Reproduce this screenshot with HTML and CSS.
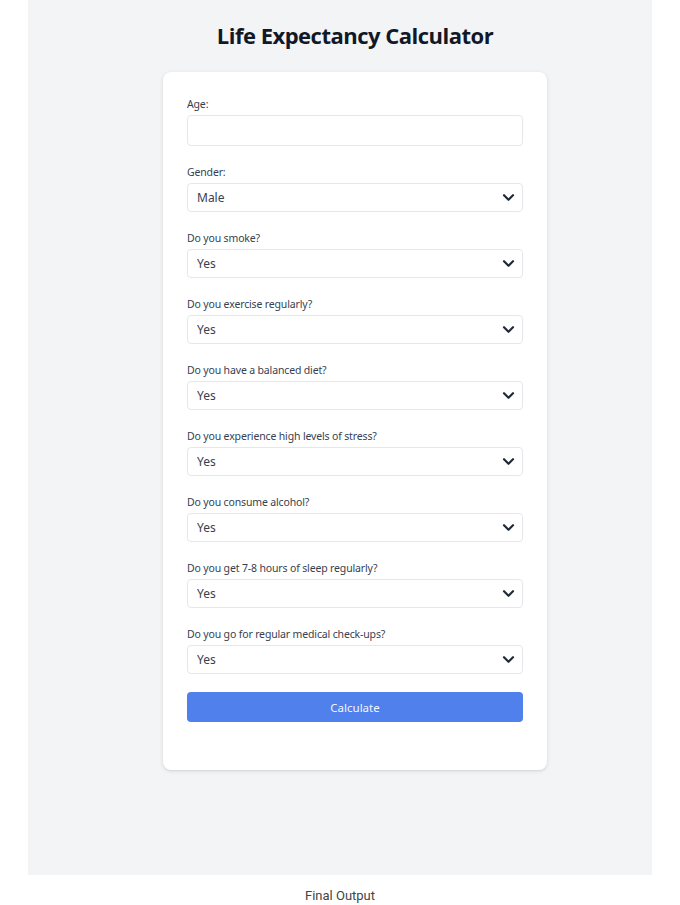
FILE: index.html
```html
<!DOCTYPE html>
<html lang="en">
<head>
<meta charset="utf-8">
<title>Life Expectancy Calculator</title>
<link rel="stylesheet" href="styles.css">
</head>
<body>
<div class="frame">
  <main class="panel">
    <h1 class="title">Life Expectancy Calculator</h1>
    <form class="card">
      <div class="field">
        <label class="label" for="age">Age:</label>
        <input class="input" id="age" type="number">
      </div>
      <div class="field">
        <label class="label">Gender:</label>
        <div class="select-wrap">
          <select class="select"><option>Male</option><option>Female</option></select>
          <svg class="chev" viewBox="0 0 14 10" width="13" height="9"><path d="M2 2.5 L7 7.5 L12 2.5" fill="none" stroke="#1f2937" stroke-width="2.4" stroke-linecap="round" stroke-linejoin="round"/></svg>
        </div>
      </div>
      <div class="field">
        <label class="label">Do you smoke?</label>
        <div class="select-wrap">
          <select class="select"><option>Yes</option><option>No</option></select>
          <svg class="chev" viewBox="0 0 14 10" width="13" height="9"><path d="M2 2.5 L7 7.5 L12 2.5" fill="none" stroke="#1f2937" stroke-width="2.4" stroke-linecap="round" stroke-linejoin="round"/></svg>
        </div>
      </div>
      <div class="field">
        <label class="label">Do you exercise regularly?</label>
        <div class="select-wrap">
          <select class="select"><option>Yes</option><option>No</option></select>
          <svg class="chev" viewBox="0 0 14 10" width="13" height="9"><path d="M2 2.5 L7 7.5 L12 2.5" fill="none" stroke="#1f2937" stroke-width="2.4" stroke-linecap="round" stroke-linejoin="round"/></svg>
        </div>
      </div>
      <div class="field">
        <label class="label">Do you have a balanced diet?</label>
        <div class="select-wrap">
          <select class="select"><option>Yes</option><option>No</option></select>
          <svg class="chev" viewBox="0 0 14 10" width="13" height="9"><path d="M2 2.5 L7 7.5 L12 2.5" fill="none" stroke="#1f2937" stroke-width="2.4" stroke-linecap="round" stroke-linejoin="round"/></svg>
        </div>
      </div>
      <div class="field">
        <label class="label">Do you experience high levels of stress?</label>
        <div class="select-wrap">
          <select class="select"><option>Yes</option><option>No</option></select>
          <svg class="chev" viewBox="0 0 14 10" width="13" height="9"><path d="M2 2.5 L7 7.5 L12 2.5" fill="none" stroke="#1f2937" stroke-width="2.4" stroke-linecap="round" stroke-linejoin="round"/></svg>
        </div>
      </div>
      <div class="field">
        <label class="label">Do you consume alcohol?</label>
        <div class="select-wrap">
          <select class="select"><option>Yes</option><option>No</option></select>
          <svg class="chev" viewBox="0 0 14 10" width="13" height="9"><path d="M2 2.5 L7 7.5 L12 2.5" fill="none" stroke="#1f2937" stroke-width="2.4" stroke-linecap="round" stroke-linejoin="round"/></svg>
        </div>
      </div>
      <div class="field">
        <label class="label">Do you get 7-8 hours of sleep regularly?</label>
        <div class="select-wrap">
          <select class="select"><option>Yes</option><option>No</option></select>
          <svg class="chev" viewBox="0 0 14 10" width="13" height="9"><path d="M2 2.5 L7 7.5 L12 2.5" fill="none" stroke="#1f2937" stroke-width="2.4" stroke-linecap="round" stroke-linejoin="round"/></svg>
        </div>
      </div>
      <div class="field">
        <label class="label">Do you go for regular medical check-ups?</label>
        <div class="select-wrap">
          <select class="select"><option>Yes</option><option>No</option></select>
          <svg class="chev" viewBox="0 0 14 10" width="13" height="9"><path d="M2 2.5 L7 7.5 L12 2.5" fill="none" stroke="#1f2937" stroke-width="2.4" stroke-linecap="round" stroke-linejoin="round"/></svg>
        </div>
      </div>
      <button class="btn" type="button">Calculate</button>
    </form>
  </main>
  <p class="caption">Final Output</p>
</div>
</body>
</html>
```

FILE: styles.css
```css
* { box-sizing: border-box; }
html, body { margin: 0; padding: 0; background: #ffffff; }
body { font-family: "Noto Sans", "Open Sans", sans-serif; }

.frame {
  display: flex;
  flex-direction: column;
  align-items: center;
}

.panel {
  width: 624px;
  height: 875px;
  background: #f3f4f6;
  display: flex;
  flex-direction: column;
  align-items: center;
  padding-left: 30px;
}

.title {
  margin: 19px 0 0;
  height: 33px;
  font-family: "Open Sans", sans-serif;
  font-size: 22px;
  line-height: 33px;
  font-weight: 700;
  letter-spacing: -0.5px;
  color: #111827;
}

.card {
  margin-top: 20px;
  width: 384px;
  background: #ffffff;
  border-radius: 8px;
  box-shadow: 0 1px 4px rgba(0,0,0,0.10), 0 1px 2px rgba(0,0,0,0.06);
  padding: 24px 24px 48px;
  display: flex;
  flex-direction: column;
}

.field {
  display: flex;
  flex-direction: column;
  margin-bottom: 18px;
}

.label {
  font-size: 10.5px;
  letter-spacing: -0.15px;
  line-height: 16px;
  height: 16px;
  margin-bottom: 3px;
  color: #374151;
}

.input {
  height: 31px;
  border: 1px solid #e5e7eb;
  border-radius: 4px;
  background: #fff;
  font: inherit;
  font-size: 12px;
  padding: 0 10px;
}

.select-wrap {
  position: relative;
  display: flex;
}

.select {
  appearance: none;
  -webkit-appearance: none;
  flex: 1;
  height: 29px;
  border: 1px solid #e5e7eb;
  border-radius: 4px;
  background: #fff;
  font-family: inherit;
  font-size: 12px;
  color: #374151;
  padding: 0 30px 0 9px;
}

.chev {
  position: absolute;
  right: 8px;
  top: 10px;
  pointer-events: none;
}

.btn {
  height: 30px;
  border: none;
  border-radius: 4px;
  background: #5080eb;
  color: #f3f6fe;
  font-family: inherit;
  font-size: 11.5px;
}

.caption {
  margin: 12px 0 0;
  font-family: "Roboto", sans-serif;
  font-size: 13px;
  line-height: 18px;
  color: #444;
}
```
